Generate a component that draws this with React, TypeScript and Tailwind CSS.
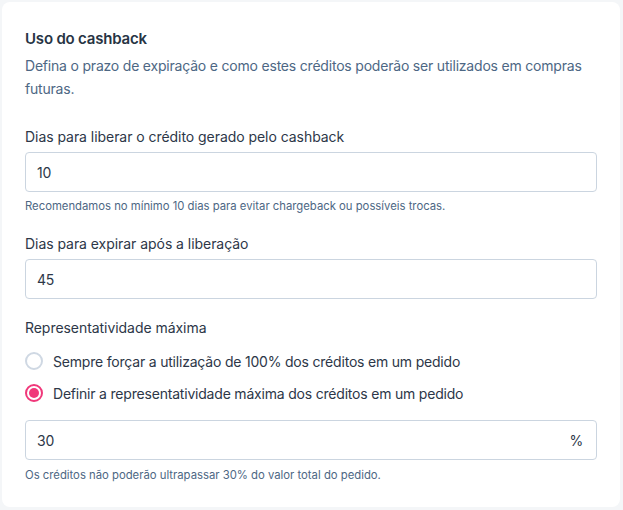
import { useState } from "react";

export default function App() {
  const [mode, setMode] = useState("definir");

  return (
    <div
      className="min-h-screen bg-[#f4f6f8] pl-[2px] pt-[2px]"
      style={{ fontFamily: "Inter, 'Noto Sans', sans-serif" }}
    >
      <div className="w-[618px] h-[505px] bg-white rounded-lg px-[23px] pt-[27px] tracking-[-0.2px]">
        {/* cabeçalho */}
        <h2 className="text-[15px] leading-[20px] font-semibold text-[#273444]">
          Uso do cashback
        </h2>
        <p className="mt-[5px] text-[14px] leading-[23px] text-[#4d6784]">
          Defina o prazo de expiração e como estes créditos poderão ser utilizados em compras
          futuras.
        </p>

        {/* dias para liberar */}
        <label className="block mt-[27px] text-[14px] leading-[20px] text-[#2d3748] tracking-[-0.05px]">
          Dias para liberar o crédito gerado pelo cashback
        </label>
        <div className="mt-[5px] h-[40px] border border-[#cbd5e0] rounded flex items-center px-[11px] text-[14px] text-[#2d3748]">
          10
        </div>
        <p className="mt-[6px] text-[11.3px] leading-[16px] text-[#4d6784] tracking-normal">
          Recomendamos no mínimo 10 dias para evitar chargeback ou possíveis trocas.
        </p>

        {/* dias para expirar */}
        <label className="block mt-[20px] text-[14px] leading-[20px] text-[#2d3748] tracking-[-0.05px]">
          Dias para expirar após a liberação
        </label>
        <div className="mt-[5px] h-[40px] border border-[#cbd5e0] rounded flex items-center px-[11px] text-[14px] text-[#2d3748]">
          45
        </div>

        {/* representatividade */}
        <label className="block mt-[19px] text-[14px] leading-[20px] text-[#2d3748] tracking-[-0.05px]">
          Representatividade máxima
        </label>
        <div className="mt-[13px] flex flex-col gap-[12px]">
          {[
            { id: "sempre", label: "Sempre forçar a utilização de 100% dos créditos em um pedido" },
            { id: "definir", label: "Definir a representatividade máxima dos créditos em um pedido" },
          ].map((opt) => (
            <button
              key={opt.id}
              onClick={() => setMode(opt.id)}
              className="flex items-center gap-[10px] h-[20px] text-left"
            >
              {mode === opt.id ? (
                <span className="w-[18px] h-[18px] rounded-full border-2 border-[#f0387a] flex items-center justify-center">
                  <span className="w-[10px] h-[10px] rounded-full bg-[#f0387a]" />
                </span>
              ) : (
                <span className="w-[18px] h-[18px] rounded-full border-2 border-[#cfd8e3] bg-white" />
              )}
              <span className="text-[14px] text-[#2d3748]">{opt.label}</span>
            </button>
          ))}
        </div>
        <div className="mt-[17px] h-[40px] border border-[#cbd5e0] rounded flex items-center justify-between px-[11px] text-[14px] text-[#2d3748]">
          <span>30</span>
          <span className="pr-[2px]">%</span>
        </div>
        <p className="mt-[7px] text-[11.3px] leading-[16px] text-[#4d6784] tracking-normal">
          Os créditos não poderão ultrapassar 30% do valor total do pedido.
        </p>
      </div>
    </div>
  );
}
